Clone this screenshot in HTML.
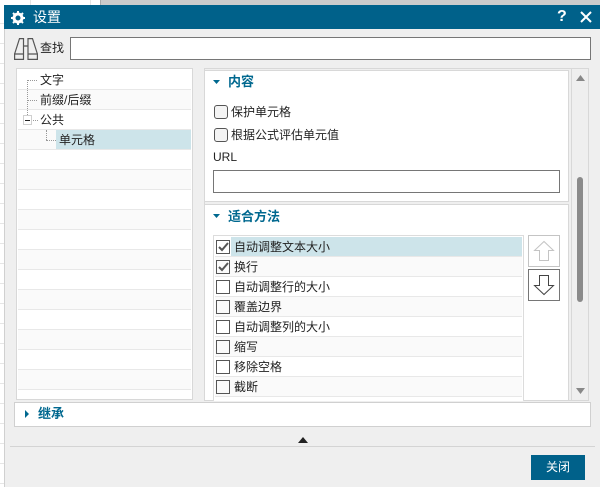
<!DOCTYPE html>
<html><head><meta charset="utf-8">
<style>
html,body{margin:0;padding:0}
body{width:600px;height:487px;position:relative;overflow:hidden;background:#fff;font-family:"Liberation Sans","Noto Sans CJK SC",sans-serif;font-size:12px;color:#222}
div{position:absolute;box-sizing:border-box}
.t{white-space:nowrap;line-height:18px;height:18px}
.h{color:#00688f;font-weight:bold;font-size:13px}
.cb{width:14px;height:14px;border:1px solid #555}
.rb{width:14px;height:14px;border:1px solid #555;border-radius:3px;background:#f4f4f4}
.sep{height:1px;background:#e8e8e8}
.alt{background:#fafafa}
svg{position:absolute;display:block}
</style></head><body>
<div style="left:30px;top:0;width:1px;height:5px;background:#e4e4e4"></div>
<div style="left:90px;top:0;width:1px;height:5px;background:#e4e4e4"></div>
<div style="left:100px;top:0;width:500px;height:5px;background:#cbcbcb;border-left:1px solid #aaa"></div>
<div style="left:0;top:4px;width:4px;height:483px;background:repeating-linear-gradient(#fff 0,#fff 19px,#e6e6e6 19px,#e6e6e6 20px)"></div>

<div style="left:4px;top:5px;width:596px;height:482px;background:#efefef;border-left:1px solid #d0d0d0"></div>
<div style="left:4px;top:5px;width:596px;height:24px;background:#00618a"></div>
<svg style="left:11px;top:11px" width="14" height="14" viewBox="0 0 14 14"><circle cx="7" cy="7" r="4" fill="none" stroke="#fff" stroke-width="3"/><path d="M7 0v2M7 12v2M0 7h2M12 7h2M2 2l1.500 1.500M10.500 10.500L12 12M2 12l1.500-1.500M10.500 3.500L12 2" stroke="#fff" stroke-width="2"/></svg>
<div class="t" style="left:33px;top:8px;color:#fff;font-size:14px">设置</div>
<div class="t" style="left:557px;top:8px;color:#fff;font-size:16px;font-weight:bold;width:12px">?</div>
<svg style="left:580px;top:11px" width="12" height="12" viewBox="0 0 12 12"><path d="M1 1l10 10M11 1L1 11" stroke="#fff" stroke-width="2"/></svg>

<svg style="left:14px;top:38px" width="24" height="22" viewBox="0 0 24 22" fill="none" stroke="#555" stroke-width="1.200"><path d="M9.500 16V.6H5.500L.6 16M14 16V.6h4.500L23.400 16M.6 16h8.900v5.400H.6zM14 16h9.400v5.400H14zM9.500 8H14"/></svg>
<div class="t" style="left:40px;top:39px;font-size:12px">查找</div>
<div style="left:70px;top:37px;width:521px;height:23px;background:#fff;border:1px solid #767676"></div>

<div style="left:16px;top:68px;width:177px;height:332px;background:#fff;border:1px solid #d8d8d8"></div>
<div class="alt" style="left:18px;top:90px;width:173px;height:19px"></div>
<div class="alt" style="left:18px;top:130px;width:173px;height:19px"></div>
<div style="left:56px;top:130px;width:135px;height:20px;background:#cde4ea"></div>
<div style="left:18px;top:89px;width:173px;height:301px;background:repeating-linear-gradient(#e8e8e8 0,#e8e8e8 1px,transparent 1px,transparent 20px)"></div>
<div class="alt" style="left:18px;top:170px;width:173px;height:19px"></div>
<div class="alt" style="left:18px;top:210px;width:173px;height:19px"></div>
<div class="alt" style="left:18px;top:250px;width:173px;height:19px"></div>
<div class="alt" style="left:18px;top:290px;width:173px;height:19px"></div>
<div class="alt" style="left:18px;top:330px;width:173px;height:19px"></div>
<div class="alt" style="left:18px;top:370px;width:173px;height:19px"></div>
<div style="left:27px;top:80px;width:1px;height:35px;border-left:1px dotted #999"></div>
<div style="left:27px;top:80px;width:10px;height:1px;border-top:1px dotted #999"></div>
<div style="left:27px;top:100px;width:10px;height:1px;border-top:1px dotted #999"></div>
<div style="left:33px;top:120px;width:5px;height:1px;border-top:1px dotted #999"></div>
<div style="left:46px;top:130px;width:1px;height:10px;border-left:1px dotted #999"></div>
<div style="left:46px;top:140px;width:10px;height:1px;border-top:1px dotted #999"></div>
<div style="left:23px;top:115px;width:9px;height:10px;background:#fff;border:1px solid #d0d0d0"></div>
<div style="left:25px;top:120px;width:5px;height:1px;background:#222"></div>
<div class="t" style="left:40px;top:71px">文字</div>
<div class="t" style="left:40px;top:91px">前缀/后缀</div>
<div class="t" style="left:40px;top:111px">公共</div>
<div class="t" style="left:59px;top:131px">单元格</div>

<div style="left:204px;top:68px;width:385px;height:333px;background:#efefef;border:1px solid #d8d8d8"></div>
<div style="left:571px;top:69px;width:1px;height:331px;background:#d8d8d8"></div>
<div style="left:204px;top:70px;width:365px;height:132px;background:#fff;border:1px solid #d8d8d8"></div>
<div style="left:204px;top:204px;width:365px;height:197px;background:#fff;border:1px solid #d8d8d8"></div>
<svg style="left:213px;top:80px" width="8" height="5"><path d="M0 0h7L3.500 4z" fill="#00688f"/></svg>
<div class="t h" style="left:228px;top:73px">内容</div>
<div class="rb" style="left:214px;top:105px"></div>
<div class="t" style="left:231px;top:103px">保护单元格</div>
<div class="rb" style="left:214px;top:128px"></div>
<div class="t" style="left:231px;top:126px">根据公式评估单元值</div>
<div class="t" style="left:213px;top:148px">URL</div>
<div style="left:213px;top:170px;width:347px;height:23px;background:#fff;border:1px solid #767676"></div>

<svg style="left:213px;top:214px" width="8" height="5"><path d="M0 0h7L3.500 4z" fill="#00688f"/></svg>
<div class="t h" style="left:228px;top:208px">适合方法</div>
<div style="left:213px;top:235px;width:311px;height:166px;background:#fff;border:1px solid #dcdcdc;border-bottom:0"></div>
<div style="left:231px;top:237px;width:291px;height:19px;background:#cde4ea"></div>
<div class="alt" style="left:215px;top:257px;width:307px;height:19px"></div>
<div class="alt" style="left:215px;top:297px;width:307px;height:19px"></div>
<div class="alt" style="left:215px;top:337px;width:307px;height:19px"></div>
<div class="alt" style="left:215px;top:377px;width:307px;height:19px"></div>
<div class="sep" style="left:215px;top:256px;width:307px"></div>
<div class="sep" style="left:215px;top:276px;width:307px"></div>
<div class="sep" style="left:215px;top:296px;width:307px"></div>
<div class="sep" style="left:215px;top:316px;width:307px"></div>
<div class="sep" style="left:215px;top:336px;width:307px"></div>
<div class="sep" style="left:215px;top:356px;width:307px"></div>
<div class="sep" style="left:215px;top:376px;width:307px"></div>
<div class="sep" style="left:215px;top:396px;width:307px"></div>

<div class="cb" style="left:216px;top:240px"></div>
<svg style="left:216px;top:240px" width="14" height="14"><path d="M3 7l3 3 6-7" fill="none" stroke="#555" stroke-width="2"/></svg>
<div class="cb" style="left:216px;top:260px"></div>
<svg style="left:216px;top:260px" width="14" height="14"><path d="M3 7l3 3 6-7" fill="none" stroke="#555" stroke-width="2"/></svg>
<div class="cb" style="left:216px;top:280px"></div>
<div class="cb" style="left:216px;top:300px"></div>
<div class="cb" style="left:216px;top:320px"></div>
<div class="cb" style="left:216px;top:340px"></div>
<div class="cb" style="left:216px;top:360px"></div>
<div class="cb" style="left:216px;top:380px"></div>
<div class="t" style="left:234px;top:238px">自动调整文本大小</div>
<div class="t" style="left:234px;top:258px">换行</div>
<div class="t" style="left:234px;top:278px">自动调整行的大小</div>
<div class="t" style="left:234px;top:298px">覆盖边界</div>
<div class="t" style="left:234px;top:318px">自动调整列的大小</div>
<div class="t" style="left:234px;top:338px">缩写</div>
<div class="t" style="left:234px;top:358px">移除空格</div>
<div class="t" style="left:234px;top:378px">截断</div>

<div style="left:528px;top:235px;width:32px;height:32px;background:#fff;border:1px solid #c4c4c4"></div>
<svg style="left:528px;top:235px" width="32" height="32" fill="none" stroke="#c4c4c4"><path d="M11.500 25.500v-10h-5L16 6.500l9.500 9h-5v10z"/></svg>
<div style="left:528px;top:269px;width:32px;height:32px;background:#fff;border:1px solid #767676"></div>
<svg style="left:528px;top:269px" width="32" height="32" fill="none" stroke="#444"><path d="M11.500 6.500v10h-5l9.500 9 9.500-9h-5v-10z"/></svg>

<svg style="left:576px;top:75px" width="9" height="7"><path d="M4.500 0L9 6H0z" fill="#888"/></svg>
<div style="left:577px;top:177px;width:6px;height:125px;background:#8a8a8a;border-radius:3px"></div>
<svg style="left:576px;top:388px" width="9" height="7"><path d="M0 0h9L4.500 6z" fill="#888"/></svg>

<div style="left:14px;top:402px;width:577px;height:25px;background:#fff;border:1px solid #d0d0d0"></div>
<svg style="left:25px;top:410px" width="5" height="8"><path d="M0 0l4 4-4 4z" fill="#00688f"/></svg>
<div class="t h" style="left:38px;top:405px">继承</div>
<svg style="left:298px;top:437px" width="10" height="6"><path d="M5 0l5 6H0z" fill="#222"/></svg>
<div style="left:10px;top:446px;width:585px;height:1px;background:#d4d4d4"></div>
<div style="left:531px;top:455px;width:54px;height:25px;background:#00618a;color:#fff;text-align:center;line-height:25px;font-size:12px">关闭</div>
</body></html>
